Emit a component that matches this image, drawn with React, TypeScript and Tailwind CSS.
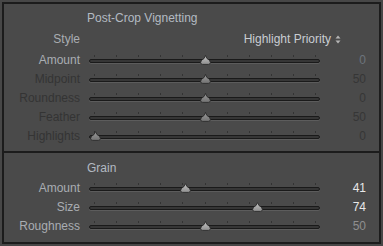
import React from "react";

type Row = {
  label: string;
  value: number;
  min: number;
  max: number;
  labelTone: string;
  valueTone: string;
  thumb: "bright" | "dim" | "none";
};

const vignette: Row[] = [
  { label: "Amount", value: 0, min: -100, max: 100, labelTone: "text-[#a9adb2]", valueTone: "text-[#6d747c]", thumb: "bright" },
  { label: "Midpoint", value: 50, min: 0, max: 100, labelTone: "text-[#343434]", valueTone: "text-[#363636]", thumb: "dim" },
  { label: "Roundness", value: 0, min: -100, max: 100, labelTone: "text-[#343434]", valueTone: "text-[#363636]", thumb: "dim" },
  { label: "Feather", value: 50, min: 0, max: 100, labelTone: "text-[#343434]", valueTone: "text-[#363636]", thumb: "dim" },
  { label: "Highlights", value: 0, min: 0, max: 100, labelTone: "text-[#343434]", valueTone: "text-[#363636]", thumb: "dim" },
];

const grain: Row[] = [
  { label: "Amount", value: 41, min: 0, max: 100, labelTone: "text-[#a9adb2]", valueTone: "text-[#e8e8e8]", thumb: "bright" },
  { label: "Size", value: 74, min: 0, max: 100, labelTone: "text-[#a9adb2]", valueTone: "text-[#e8e8e8]", thumb: "bright" },
  { label: "Roughness", value: 50, min: 0, max: 100, labelTone: "text-[#a9adb2]", valueTone: "text-[#8f8f8f]", thumb: "bright" },
];

const ticks = [0, 1, 2, 3, 4, 5, 6, 7, 8, 9, 10];

const Thumb = ({ tone }: { tone: "bright" | "dim" }) => {
  const top = tone === "bright" ? "#c4c4c4" : "#9a9a9a";
  const bottom = tone === "bright" ? "#8e8e8e" : "#727272";
  const id = `th-${tone}`;
  return (
    <svg width="11" height="10" viewBox="0 0 11 10">
      <defs>
        <linearGradient id={id} x1="0" y1="0" x2="0" y2="1">
          <stop offset="0" stopColor={top} />
          <stop offset="1" stopColor={bottom} />
        </linearGradient>
      </defs>
      <path
        d="M5.5 0.6 L6.9 3.4 Q10.4 5.2 10.4 7.4 Q10.4 9.4 8.4 9.4 H2.6 Q0.6 9.4 0.6 7.4 Q0.6 5.2 4.1 3.4 Z"
        fill={`url(#${id})`}
        stroke="#2b2b2b"
        strokeWidth="0.9"
      />
    </svg>
  );
};

const Slider = ({ row }: { row: Row }) => {
  const pct = (row.value - row.min) / (row.max - row.min);
  const x = 6 + pct * 220;
  return (
    <div className="relative w-[231px] h-[19px]">
      {ticks.map((i) => (
        <div
          key={i}
          className="absolute top-[5px] w-px h-[2px] bg-[#333333]"
          style={{ left: 5 + i * 22.1 }}
        />
      ))}
      <div className="absolute top-[9px] left-0 right-0 h-[4px] rounded-full bg-[#363636] border border-[#1a1a1a] shadow-[0_1px_0_#5c5c5c]" />
      {row.thumb !== "none" && (
        <div className="absolute top-[5px]" style={{ left: x - 5.5 }}>
          <Thumb tone={row.thumb} />
        </div>
      )}
    </div>
  );
};

const SliderRow = ({ row }: { row: Row }) => (
  <div className="flex items-center h-[19px]">
    <div className={`w-[76px] text-right ${row.labelTone}`}>{row.label}</div>
    <div className="ml-[9px]">
      <Slider row={row} />
    </div>
    <div className={`w-[46px] text-right ${row.valueTone}`}>{row.value}</div>
  </div>
);

export default function App() {
  return (
    <div
      className="w-[383px] h-[246px] bg-[#474747] p-[2px] text-[12px] leading-none"
      style={{ fontFamily: '"Liberation Sans", Arial, sans-serif' }}
    >
      <div className="h-[242px] border-2 border-[#1c1c1c] bg-[#4a4a4a] flex flex-col">
        <div className="h-[147px] pt-[4px]">
          <div className="h-[20px] flex items-center pl-[83px] text-[#b3bac2]">
            Post-Crop Vignetting
          </div>
          <div className="h-[22px] flex items-center">
            <div className="w-[76px] text-right text-[#a9adb2]">Style</div>
            <div className="ml-auto mr-[38px] flex items-center gap-[4px] text-[#c9cdd2]">
              <span>Highlight Priority</span>
              <svg width="6" height="9" viewBox="0 0 6 9">
                <path d="M3 0.5 L5.5 3.5 H0.5 Z" fill="#b5b5b5" />
                <path d="M3 8.5 L5.5 5.5 H0.5 Z" fill="#b5b5b5" />
              </svg>
            </div>
          </div>
          {vignette.map((r) => (
            <SliderRow key={r.label} row={r} />
          ))}
        </div>
        <div className="h-[2px] bg-[#1c1c1c]" />
        <div className="flex-1 pt-[5px]">
          <div className="h-[20px] flex items-center pl-[83px] text-[#b3bac2]">
            Grain
          </div>
          {grain.map((r) => (
            <SliderRow key={r.label} row={r} />
          ))}
        </div>
      </div>
    </div>
  );
}
